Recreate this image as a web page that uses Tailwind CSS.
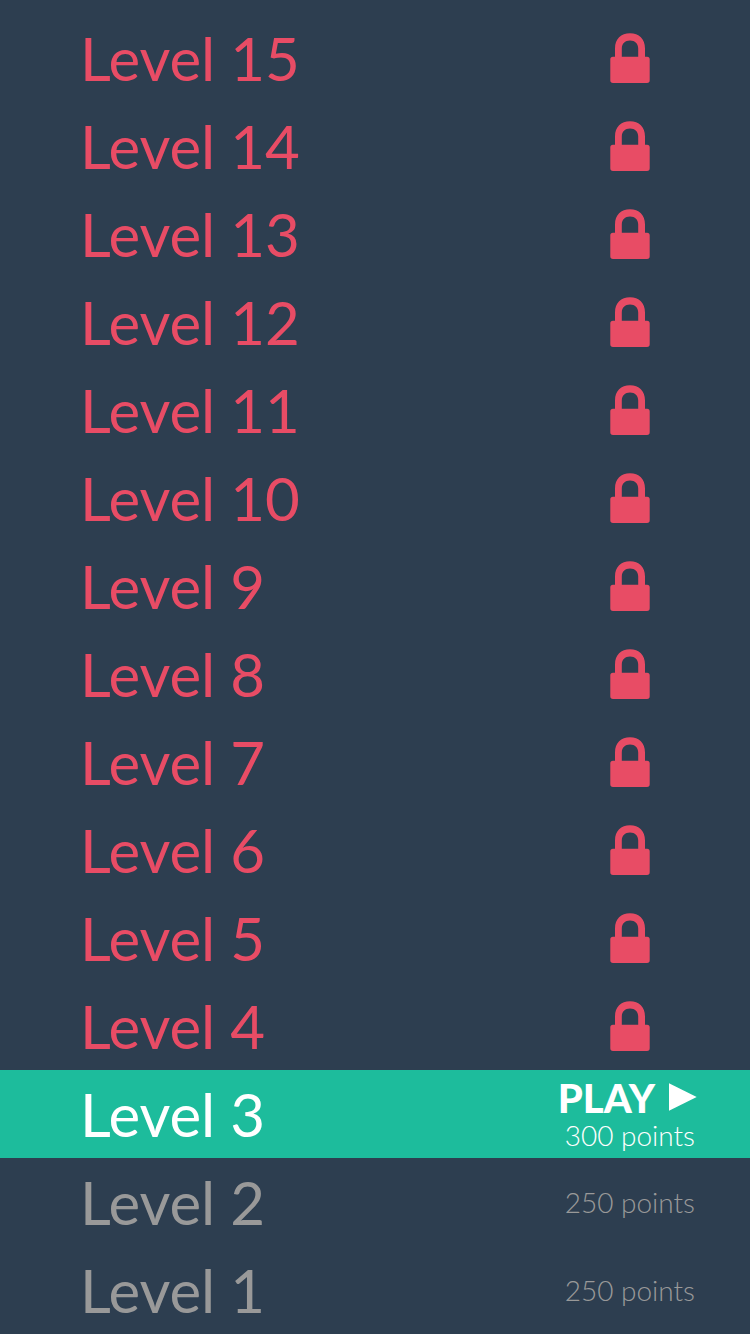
<!DOCTYPE html>
<html lang="en"><head><meta charset="utf-8"><title>Levels</title>
<script src="https://cdn.jsdelivr.net/npm/@tailwindcss/browser@4"></script></head>
<body class="bg-[#2d3e50] font-['Lato',sans-serif]">
<main id="levels" class="flex h-[1334px] w-[750px] flex-col overflow-hidden pt-[14px]"></main>
<template id="lock"><svg class="mr-[100px] h-[50px] w-[40px] fill-[#e84c65]" viewBox="0 0 40 50"><path fill-rule="evenodd" d="M5 23.700V15.500C5 6 11 0.300 20 0.300S35 6 35 15.500V23.700H37Q39.700 23.700 39.700 26.300V47.300Q39.700 50 37 50H3Q0.300 50 0.300 47.300V26.300Q0.300 23.700 3 23.700ZM11.800 23.700H28.200V15.500C28.200 10.500 25 7.500 20 7.500S11.800 10.500 11.800 15.500Z"/></svg></template>
<template id="play"><div class="flex flex-col items-end pt-[2px] pr-[55px]"><div class="flex h-[40px] items-center gap-[14px] text-[40px] leading-[40px] font-black text-white"><span class="pt-[2px]">PLAY</span><svg class="-mr-[2px] h-[28px] w-[28px] fill-white" viewBox="0 0 28 28"><path d="M-0.300 0L27.700 14L-0.300 28Z"/></svg></div><div class="text-[28px] leading-[36px] font-light text-white">300 points</div></div></template>
<template id="pts"><div class="pr-[55px] text-[28px] font-light text-[#999]">250 points</div></template>
<script>
const list = document.getElementById('levels');
for (let n = 15; n >= 1; n--) {
  const row = document.createElement('div');
  row.className = 'flex h-[88px] shrink-0 items-center justify-between pl-[80px] ' + (n > 3 ? 'text-[#e84c65]' : n === 3 ? 'bg-[#1dbc9c] text-white' : 'text-[#999999]');
  const label = document.createElement('span');
  label.className = 'text-[60px] leading-[88px] tracking-[-0.12px]';
  label.textContent = 'Level ' + n;
  row.append(label, document.getElementById(n > 3 ? 'lock' : n === 3 ? 'play' : 'pts').content.cloneNode(true));
  list.append(row);
}
</script></body></html>
